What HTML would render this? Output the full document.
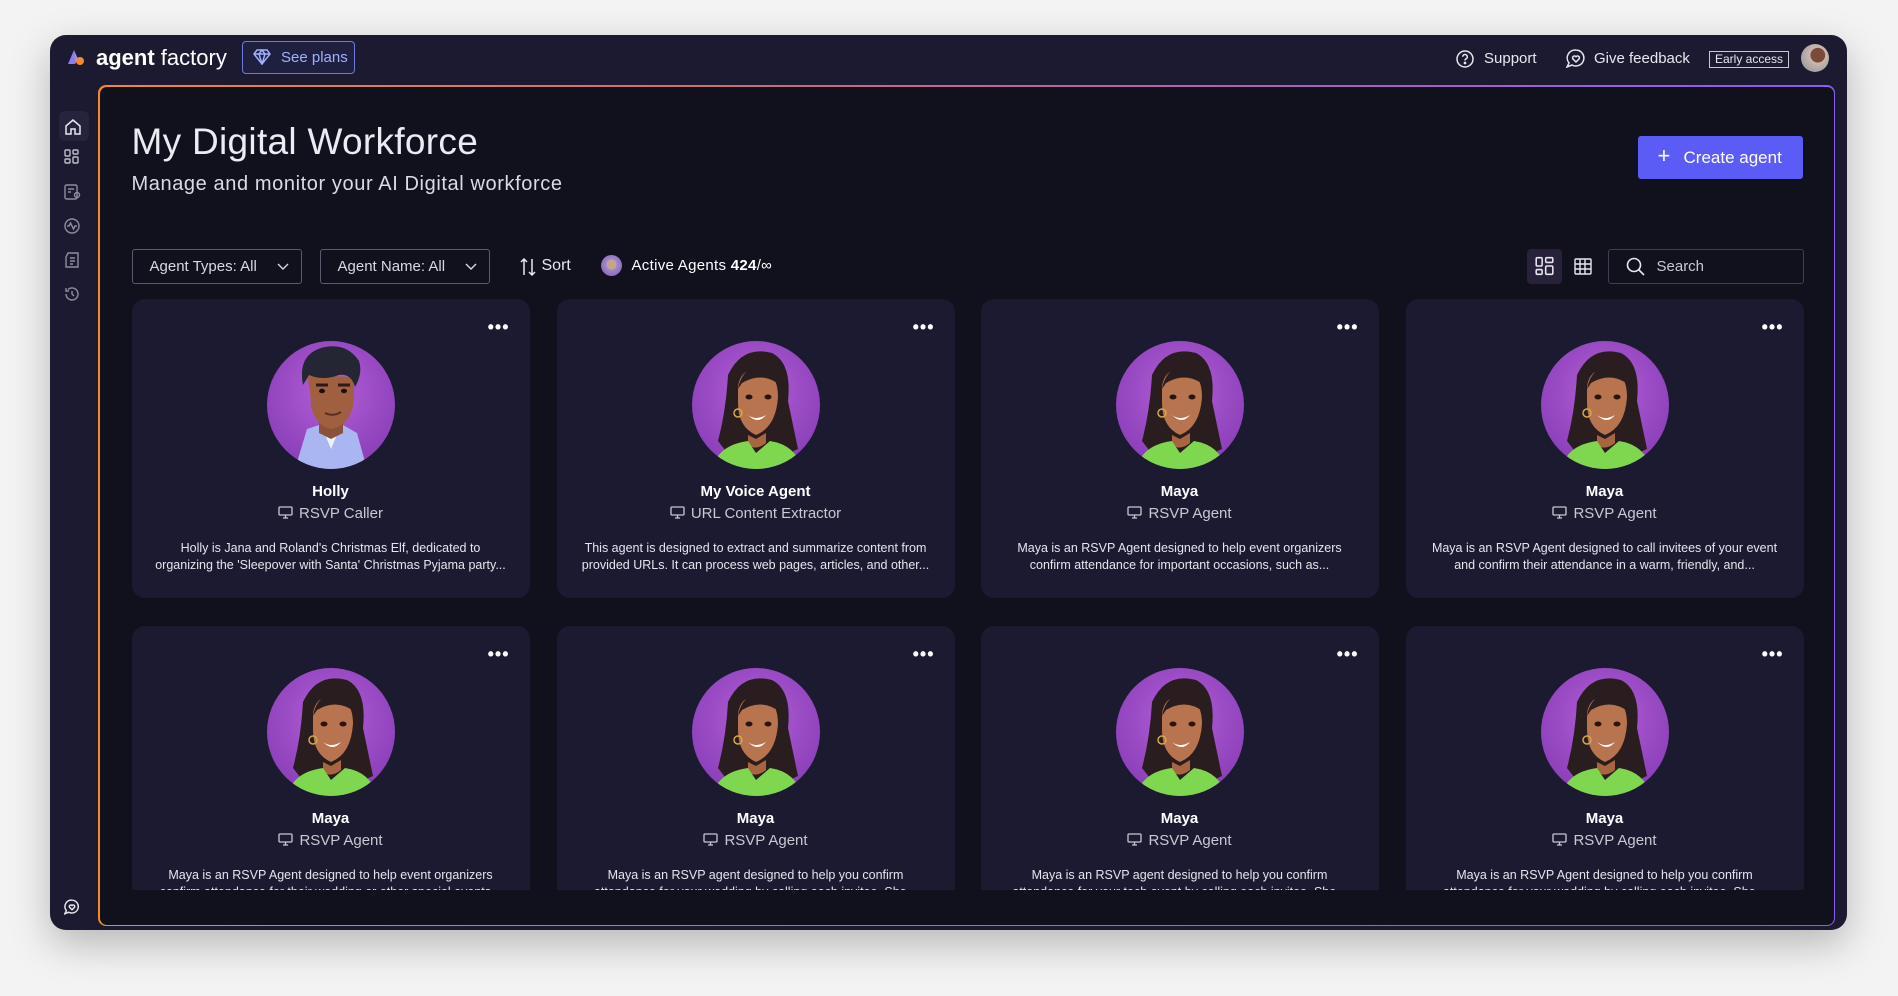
<!DOCTYPE html>
<html><head><meta charset="utf-8"><style>
*{box-sizing:border-box;margin:0;padding:0}
body{width:1898px;height:996px;background:#f3f3f4;font-family:"Liberation Sans",sans-serif;position:relative;overflow:hidden;color:#e8e7ef}
.win{position:absolute;left:50px;top:35px;width:1797px;height:895px;background:#1c1a30;border-radius:16px;box-shadow:0 14px 40px rgba(0,0,0,.25);overflow:hidden}
.abs{position:absolute}
.main{position:absolute;left:48px;top:50px;width:1737px;height:841px;border-radius:8px;padding:1.5px;background:linear-gradient(90deg,#f08a2c 0%,#c86a7a 40%,#8a5cf0 100%)}
.inner{width:100%;height:100%;background:#11101d;border-radius:7px;position:relative;overflow:hidden}
.card{position:absolute;width:398px;height:299px;background:#1c1a30;border-radius:13px;text-align:center}
.card .dots{position:absolute;right:20px;top:18px;font-size:18px;letter-spacing:1px;color:#fff;font-weight:bold}
.card svg.av{position:absolute;left:135px;top:42px}
.card .nm{position:absolute;left:0;right:0;top:184px;font-weight:bold;font-size:15px;color:#fff}
.card .rl{position:absolute;left:0;right:0;top:206px;font-size:15px;color:#c9c8d3}
.card .ds{position:absolute;left:14px;right:14px;top:241px;font-size:12.5px;line-height:17px;color:#e6e5ee}
.btn{position:absolute;border:1px solid #5b5a6e;border-radius:3px;color:#d9d8e2;font-size:15px}
.side svg{position:absolute;left:14px}
</style></head><body>
<div class="win">
 <svg class="abs" style="left:17px;top:14px" width="18" height="17" viewBox="0 0 18 17"><path d="M7 1 L1 15 L8 15 Z" fill="#8c7cf5"/><path d="M7 1 L11 10 L8 15 Z" fill="#a58cf7"/><circle cx="13" cy="12" r="4" fill="#f58a2a"/></svg>
 <div class="abs" style="left:46px;top:10px;font-size:22px;color:#fff"><b>agent</b> factory</div>
 <div class="abs" style="left:192px;top:6px;width:113px;height:33px;border:1px solid #6e79d8;border-radius:4px;background:#1f2040;color:#9fb0ff;font-size:15px;line-height:31px;padding-left:38px">See plans</div>
 <svg class="abs" style="left:203px;top:14px" width="18" height="16" viewBox="0 0 18 16" fill="none" stroke="#9fb0ff" stroke-width="1.5"><path d="M4 1h10l3 4-8 10L1 5z M1 5h16 M6 5l3 10 3-10 M6 5l3-4 3 4"/></svg>
 <svg class="abs" style="left:1406px;top:15px" width="18" height="18" viewBox="0 0 18 18" fill="none" stroke="#e8e7ef" stroke-width="1.5"><circle cx="9" cy="9" r="8"/><path d="M6.7 6.8a2.3 2.3 0 1 1 3 2.2c-.6.3-.7.8-.7 1.5"/><circle cx="9" cy="13" r=".6" fill="#e8e7ef"/></svg>
 <div class="abs" style="left:1434px;top:15px;font-size:15px">Support</div>
 <svg class="abs" style="left:1516px;top:14px" width="20" height="19" viewBox="0 0 20 19" fill="none" stroke="#e8e7ef" stroke-width="1.5"><path d="M10 1a8 8 0 1 1-4 15L1 18l2-4A8 8 0 0 1 10 1z"/><path d="M10 13l-3-3a1.8 1.8 0 0 1 3-2.3 1.8 1.8 0 0 1 3 2.3z"/></svg>
 <div class="abs" style="left:1544px;top:15px;font-size:15px">Give feedback</div>
 <div class="abs" style="left:1659px;top:16px;width:80px;height:17px;border:1px solid #c9c8d3;font-size:12px;line-height:15px;text-align:center;color:#e8e7ef">Early access</div>
 <div class="abs" style="left:1751px;top:9px;width:28px;height:28px;border-radius:50%;background:radial-gradient(circle at 60% 40%,#7a4a3a 0 30%,#c9b8b0 32%,#8c8f9a 100%)"></div>
 <div class="side">
  <div class="abs" style="left:9px;top:76px;width:30px;height:30px;border-radius:6px;background:#26243c"></div>
  <svg style="top:84px" width="18" height="16" viewBox="0 0 18 16" fill="none" stroke="#e8e7ef" stroke-width="1.5"><path d="M2 7l7-6 7 6v8H11v-5H7v5H2z"/></svg>
  <svg style="top:114px" width="16" height="16" viewBox="0 0 16 16" fill="none" stroke="#bdbccb" stroke-width="1.4"><rect x="1" y="1" width="5" height="6" rx="1"/><rect x="1" y="10" width="5" height="4" rx="1"/><rect x="9" y="1" width="5" height="4" rx="1"/><rect x="9" y="8" width="5" height="6" rx="1"/></svg>
  <svg style="top:149px" width="18" height="16" viewBox="0 0 18 16" fill="none" stroke="#8f8ea0" stroke-width="1.4"><rect x="1" y="1" width="12" height="14" rx="1.5"/><path d="M4 5h6M4 8h3"/><circle cx="13" cy="11" r="2.5"/></svg>
  <svg style="top:183px" width="16" height="16" viewBox="0 0 16 16" fill="none" stroke="#8f8ea0" stroke-width="1.4"><circle cx="8" cy="8" r="7"/><path d="M3 8h2l1.5-3 3 6L11 8h2"/></svg>
  <svg style="top:217px" width="16" height="16" viewBox="0 0 16 16" fill="none" stroke="#8f8ea0" stroke-width="1.4"><path d="M4 1h10v14H2V5z"/><path d="M6 6h5M6 9h5M6 12h3"/></svg>
  <svg style="top:251px" width="16" height="16" viewBox="0 0 16 16" fill="none" stroke="#8f8ea0" stroke-width="1.4"><path d="M2 8a6 6 0 1 0 2-4.5"/><path d="M2 2v3h3M8 5v3l2 2"/></svg>
  <svg style="top:864px" width="16" height="16" viewBox="0 0 20 19" fill="none" stroke="#e8e7ef" stroke-width="1.8"><path d="M10 1a8 8 0 1 1-4 15L1 18l2-4A8 8 0 0 1 10 1z"/><path d="M10 13l-3-3a1.8 1.8 0 0 1 3-2.3 1.8 1.8 0 0 1 3 2.3z"/></svg>
 </div>
 <div class="main"><div class="inner">
  <div class="abs" style="left:32px;top:34px;font-size:37px;letter-spacing:0.3px;color:#ecebf2">My Digital Workforce</div>
  <div class="abs" style="left:32px;top:86px;font-size:20px;letter-spacing:0.6px;color:#dcdbe4">Manage and monitor your AI Digital workforce</div>
  <div class="abs" style="left:1538px;top:49px;width:165px;height:43px;background:#5b5cf6;border-radius:3px;color:#fff;font-size:17px;line-height:43px;padding-left:46px">Create agent</div>
  <div class="abs" style="left:1558px;top:56px;font-size:22px;color:#fff">+</div>
  <div class="btn" style="left:32px;top:162px;width:170px;height:35px;line-height:33px;padding-left:17px">Agent Types: All</div>
  <div class="btn" style="left:220px;top:162px;width:170px;height:35px;line-height:33px;padding-left:17px">Agent Name: All</div>
  <svg class="abs" style="left:177px;top:176px" width="12" height="8" viewBox="0 0 12 8" fill="none" stroke="#d9d8e2" stroke-width="1.4"><path d="M1 1l5 5 5-5"/></svg>
  <svg class="abs" style="left:365px;top:176px" width="12" height="8" viewBox="0 0 12 8" fill="none" stroke="#d9d8e2" stroke-width="1.4"><path d="M1 1l5 5 5-5"/></svg>
  <svg class="abs" style="left:420px;top:171px" width="16" height="18" viewBox="0 0 16 18" fill="none" stroke="#e8e7ef" stroke-width="1.5"><path d="M4 17V1M1 4l3-3 3 3M12 1v16M9 14l3 3 3-3"/></svg>
  <div class="abs" style="left:442px;top:170px;font-size:16px">Sort</div>
  <div class="abs" style="left:501px;top:168px;width:21px;height:21px;border-radius:50%;background:radial-gradient(circle at 50% 45%,#c9a48c 0 30%,#9a8cc8 34%,#8e4fc0 100%)"></div>
  <div class="abs" style="left:532px;top:170px;font-size:15px;letter-spacing:0.3px;color:#fff">Active Agents <b>424</b>/∞</div>
  <div class="abs" style="left:1427px;top:162px;width:35px;height:35px;border-radius:4px;background:#27213a"></div>
  <svg class="abs" style="left:1435px;top:169px" width="19" height="20" viewBox="0 0 16 16" fill="none" stroke="#e8e7ef" stroke-width="1.3"><rect x="1" y="1" width="5" height="7" rx="1"/><rect x="1" y="11" width="5" height="4" rx="1"/><rect x="9" y="1" width="6" height="4" rx="1"/><rect x="9" y="8" width="6" height="7" rx="1"/></svg>
  <svg class="abs" style="left:1474px;top:171px" width="18" height="17" viewBox="0 0 18 17" fill="none" stroke="#e8e7ef" stroke-width="1.4"><rect x="1" y="1" width="16" height="15" rx="1"/><path d="M1 6h16M1 11h16M6 1v15M11 1v15"/></svg>
  <div class="abs" style="left:1508px;top:162px;width:196px;height:35px;border:1px solid #3e3d52;border-radius:3px;color:#c9c8d3;font-size:15px;line-height:33px;padding-left:48px">Search</div>
  <svg class="abs" style="left:1526px;top:170px" width="19" height="19" viewBox="0 0 19 19" fill="none" stroke="#e8e7ef" stroke-width="1.6"><circle cx="8" cy="8" r="6.5"/><path d="M13 13l5 5"/></svg>
  <div class="abs" style="left:0;top:0;width:100%;height:803px;overflow:hidden" id="grid"></div>
 </div></div>
</div>
<script>
function maya(id){return `<svg class="av" width="128" height="128" viewBox="0 0 128 128"><defs><radialGradient id="g${id}" cx="50%" cy="40%" r="60%"><stop offset="0" stop-color="#b45fd8"/><stop offset="1" stop-color="#8a3fb8"/></radialGradient><clipPath id="c${id}"><circle cx="64" cy="64" r="64"/></clipPath></defs><circle cx="64" cy="64" r="64" fill="url(#g${id})"/><g clip-path="url(#c${id})"><path d="M36 34 Q50 4 80 12 Q100 22 96 60 L106 108 L84 118 L40 118 L26 100 Q34 70 36 34Z" fill="#2a1d1f"/><path d="M46 46 Q48 28 66 28 Q86 30 86 56 Q84 86 64 94 Q46 86 46 62Z" fill="#b8734f"/><path d="M46 48 Q50 26 70 24 Q84 28 88 44 Q70 30 50 42Z" fill="#2a1d1f"/><path d="M56 94 L64 98 L74 92 L74 102 Q64 110 56 104Z" fill="#a8653f"/><path d="M20 128 Q26 104 56 100 L64 112 L78 100 Q104 104 110 128Z" fill="#7fd64f"/><path d="M56 74 Q64 80 74 74 Q66 84 56 74Z" fill="#fff"/><ellipse cx="57" cy="56" rx="3.5" ry="2.5" fill="#2a1410"/><ellipse cx="76" cy="56" rx="3.5" ry="2.5" fill="#2a1410"/><circle cx="46" cy="72" r="4" fill="none" stroke="#d4a84a" stroke-width="1.5"/></g></svg>`}
function holly(){return `<svg class="av" width="128" height="128" viewBox="0 0 128 128"><defs><radialGradient id="gh" cx="50%" cy="40%" r="60%"><stop offset="0" stop-color="#b45fd8"/><stop offset="1" stop-color="#8a3fb8"/></radialGradient><clipPath id="ch"><circle cx="64" cy="64" r="64"/></clipPath></defs><circle cx="64" cy="64" r="64" fill="url(#gh)"/><g clip-path="url(#ch)"><path d="M40 88 L52 84 L76 84 L90 92 L100 128 L28 128Z" fill="#a9b6f2"/><path d="M54 84 L64 108 L74 84Z" fill="#eef0fa"/><path d="M52 70 L52 92 L64 98 L76 92 L76 70Z" fill="#8a5238"/><path d="M40 34 Q44 52 44 66 Q50 86 64 88 Q80 86 86 66 Q88 52 86 36Z" fill="#a0603f"/><path d="M36 44 Q30 12 58 6 Q80 2 92 20 Q96 32 88 46 Q84 32 72 34 Q56 40 42 34Z" fill="#252634"/><ellipse cx="55" cy="50" rx="3" ry="2.2" fill="#1a0e0a"/><ellipse cx="77" cy="50" rx="3" ry="2.2" fill="#1a0e0a"/><path d="M49 44 L61 44 M71 44 L83 44" stroke="#2a1a18" stroke-width="3"/><path d="M58 72 Q66 76 74 71" stroke="#5a2e22" stroke-width="2" fill="none"/></g></svg>`}
const data=[
["Holly","RSVP Caller","Holly is Jana and Roland's Christmas Elf, dedicated to<br>organizing the 'Sleepover with Santa' Christmas Pyjama party...",1],
["My Voice Agent","URL Content Extractor","This agent is designed to extract and summarize content from<br>provided URLs. It can process web pages, articles, and other..."],
["Maya","RSVP Agent","Maya is an RSVP Agent designed to help event organizers<br>confirm attendance for important occasions, such as..."],
["Maya","RSVP Agent","Maya is an RSVP Agent designed to call invitees of your event<br>and confirm their attendance in a warm, friendly, and..."],
["Maya","RSVP Agent","Maya is an RSVP Agent designed to help event organizers<br>confirm attendance for their wedding or other special events..."],
["Maya","RSVP Agent","Maya is an RSVP agent designed to help you confirm<br>attendance for your wedding by calling each invitee. She..."],
["Maya","RSVP Agent","Maya is an RSVP agent designed to help you confirm<br>attendance for your tech event by calling each invitee. She..."],
["Maya","RSVP Agent","Maya is an RSVP Agent designed to help you confirm<br>attendance for your wedding by calling each invitee. She..."]];
const xs=[32,457,881,1306],ys=[212,539];
const mon='<svg width="15" height="13" viewBox="0 0 15 13" fill="none" stroke="#c9c8d3" stroke-width="1.3" style="vertical-align:-1px;margin-right:6px"><rect x="1" y="1" width="13" height="8" rx="1"/><path d="M5 12h5M7.5 9v3"/></svg>';
let h='';data.forEach((d,i)=>{h+=`<div class="card" style="left:${xs[i%4]}px;top:${ys[Math.floor(i/4)]}px"><div class="dots">•••</div>${d[3]?holly():maya(i)}<div class="nm">${d[0]}</div><div class="rl">${mon}${d[1]}</div><div class="ds">${d[2]}</div></div>`});
document.getElementById('grid').innerHTML=h;
</script>
</body></html>
